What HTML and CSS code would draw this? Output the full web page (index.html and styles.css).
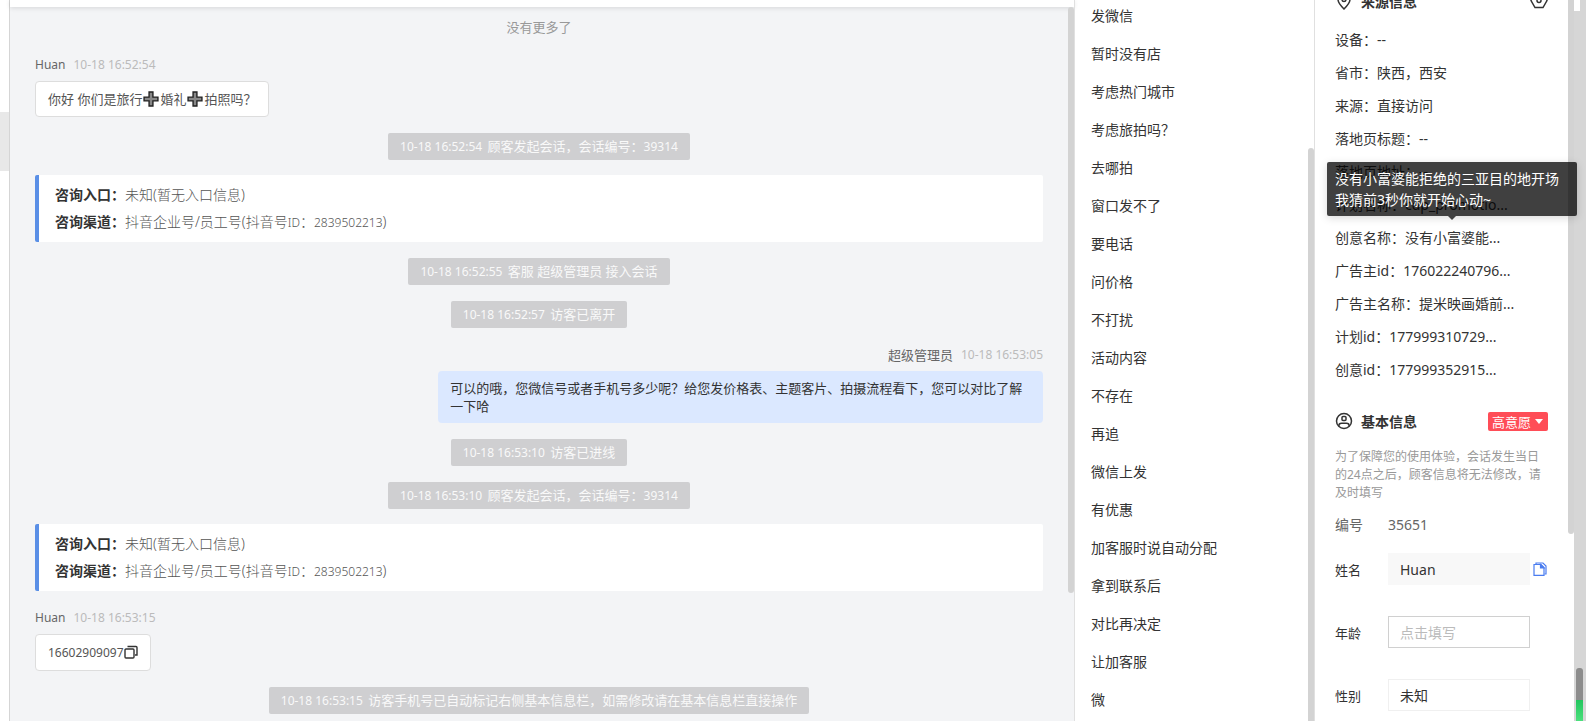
FILE: index.html
```html
<!DOCTYPE html>
<html lang="zh-CN">
<head>
  <meta charset="UTF-8" />
  <meta name="viewport" content="width=device-width, initial-scale=1.0" />
  <title>在线会话</title>
  <link rel="stylesheet" href="styles.css">
</head>
<body>
  <div class="left-strip"><div class="left-active"></div></div>

  <main class="chat">
    <div class="chat-top"></div>
    <div class="chat-body">
      <p class="no-more">没有更多了</p>

      <div class="message">
        <div class="meta"><span class="name">Huan</span><time>10-18 16:52:54</time></div>
        <div class="bubble">你好 你们是旅行<svg class="plus" viewBox="0 0 15 15"><path d="M5.700 1h3.600v4.700h4.700v3.600h-4.700v4.700h-3.600v-4.700h-4.700v-3.600h4.700z" fill="#888" stroke="#222" stroke-width="1.300"/></svg>婚礼<svg class="plus" viewBox="0 0 15 15"><path d="M5.700 1h3.600v4.700h4.700v3.600h-4.700v4.700h-3.600v-4.700h-4.700v-3.600h4.700z" fill="#888" stroke="#222" stroke-width="1.300"/></svg>拍照吗？</div>
      </div>

      <div class="notice"><time>10-18 16:52:54</time> 顾客发起会话，会话编号：<span class="num">39314</span></div>

      <div class="entry-card">
        <p><b>咨询入口：</b>未知(暂无入口信息)</p>
        <p><b>咨询渠道：</b>抖音企业号/员工号(抖音号<span class="num">ID</span>：<span class="num">2839502213</span>)</p>
      </div>

      <div class="notice"><time>10-18 16:52:55</time> 客服 超级管理员 接入会话</div>
      <div class="notice"><time>10-18 16:52:57</time> 访客已离开</div>

      <div class="message mine">
        <div class="meta"><span>超级管理员</span><time>10-18 16:53:05</time></div>
        <div class="bubble">可以的哦，您微信号或者手机号多少呢？给您发价格表、主题客片、拍摄流程看下，您可以对比了解一下哈</div>
      </div>

      <div class="notice"><time>10-18 16:53:10</time> 访客已进线</div>
      <div class="notice"><time>10-18 16:53:10</time> 顾客发起会话，会话编号：<span class="num">39314</span></div>

      <div class="entry-card">
        <p><b>咨询入口：</b>未知(暂无入口信息)</p>
        <p><b>咨询渠道：</b>抖音企业号/员工号(抖音号<span class="num">ID</span>：<span class="num">2839502213</span>)</p>
      </div>

      <div class="message">
        <div class="meta"><span class="name">Huan</span><time>10-18 16:53:15</time></div>
        <div class="bubble"><span class="num">16602909097</span><button class="copy-phone" aria-label="复制"><svg viewBox="0 0 14 14" fill="none" stroke="#333" stroke-width="1.400"><rect x="1" y="4" width="9" height="9" rx="1"/><path d="M3.500 1.500h8.500q1 0 1 1v7.500h-2"/></svg></button></div>
      </div>

      <div class="notice"><time>10-18 16:53:15</time> 访客手机号已自动标记右侧基本信息栏，如需修改请在基本信息栏直接操作</div>
    </div>
    <div class="thumb chat-thumb"></div>
  </main>

  <aside class="phrases">
    <ul>
      <li>发微信</li>
      <li>暂时没有店</li>
      <li>考虑热门城市</li>
      <li>考虑旅拍吗？</li>
      <li>去哪拍</li>
      <li>窗口发不了</li>
      <li>要电话</li>
      <li>问价格</li>
      <li>不打扰</li>
      <li>活动内容</li>
      <li>不存在</li>
      <li>再追</li>
      <li>微信上发</li>
      <li>有优惠</li>
      <li>加客服时说自动分配</li>
      <li>拿到联系后</li>
      <li>对比再决定</li>
      <li>让加客服</li>
      <li>微</li>
    </ul>
    <div class="thumb phrases-thumb"></div>
  </aside>

  <aside class="info">
    <div class="info-scroll">
      <div class="title">
        <svg class="icon" viewBox="0 0 18 18" fill="none" stroke="#333" stroke-width="1.500"><path d="M9 17C5.500 13.500 3 11 3 7.500a6 6 0 0 1 12 0c0 3.500-2.500 6-6 9.500z"/><circle cx="9" cy="7.500" r="2"/></svg>
        <h2>来源信息</h2>
        <button class="setting" aria-label="设置"><svg class="icon" viewBox="0 0 18 18" fill="none" stroke="#333" stroke-width="1.500"><path d="M5 1.500h8l4 7-4 7H5l-4-7z"/><circle cx="9" cy="8.500" r="2"/></svg></button>
      </div>
      <ul class="source">
        <li>设备：--</li>
        <li>省市：陕西，西安</li>
        <li>来源：直接访问</li>
        <li>落地页标题：--</li>
        <li>落地页地址：--</li>
        <li>计划名称：cdp_promotio...</li>
        <li class="has-tip">创意名称：没有小富婆能...
          <div class="tooltip" role="tooltip">没有小富婆能拒绝的三亚目的地开场我猜前3秒你就开始心动~</div>
        </li>
        <li>广告主id：176022240796...</li>
        <li>广告主名称：提米映画婚前...</li>
        <li>计划id：177999310729...</li>
        <li>创意id：177999352915...</li>
      </ul>

      <div class="title basic">
        <svg class="icon" viewBox="0 0 18 18" fill="none" stroke="#333" stroke-width="1.500"><circle cx="9" cy="9" r="7.500"/><rect x="7" y="4.500" width="4" height="4" rx="1"/><path d="M3.800 14c0-2 1.200-2.700 2.700-2.700h5c1.500 0 2.700.7 2.700 2.700"/></svg>
        <h2>基本信息</h2>
        <button class="intent">高意愿<i class="caret"></i></button>
      </div>
      <p class="hint">为了保障您的使用体验，会话发生当日的24点之后，顾客信息将无法修改，请及时填写</p>
      <div class="serial"><span class="label">编号</span><span>35651</span></div>
      <form class="fields">
        <div class="field">
          <label class="label" for="name">姓名</label>
          <input class="filled" type="text" id="name" value="Huan">
          <button type="button" class="copy" aria-label="复制姓名"><svg viewBox="0 0 14 14" fill="none" stroke="#4a7cf0" stroke-width="1.200"><path d="M3 2.500V1h7l3 3v8h-1.500"/><path d="M1 2.500h7l3 3V13.400H1z"/><path d="M7.500 2.500V6H11z" fill="#4a7cf0"/></svg></button>
        </div>
        <div class="field">
          <label class="label" for="age">年龄</label>
          <input type="text" id="age" placeholder="点击填写">
        </div>
        <div class="field">
          <label class="label" for="gender">性别</label>
          <select id="gender"><option>未知</option></select>
        </div>
      </form>
    </div>
    <div class="thumb info-thumb"></div>
  </aside>

  <div class="edge">
    <div class="edge-gap"></div>
    <div class="edge-mark"></div>
  </div>
</body>
</html>
```
FILE: styles.css
```css
* {
  box-sizing: border-box;
  margin: 0;
  padding: 0;
}
body {
  display: flex;
  height: 100vh;
  overflow: hidden;
  background: #fff;
  color: #333;
  font-family: "Noto Sans", "Noto Sans CJK SC", sans-serif;
  font-size: 14px;
}
ul {
  list-style: none;
}
button {
  border: none;
  background: none;
  font-family: inherit;
  cursor: pointer;
}
.thumb {
  position: absolute;
  right: 0;
  width: 6px;
  border-radius: 3px;
  background: #d3d3d3;
}
.left-strip {
  flex: none;
  width: 10px;
  padding-top: 112px;
  border-right: 1px solid #d5d5d5;
}
.left-active {
  height: 59px;
  background: #e8e8e8;
}

/* chat */
.chat {
  position: relative;
  flex: 1;
  min-width: 0;
  background: #f3f4f6;
  font-size: 13px;
}
.chat-top {
  height: 7px;
  background: #fff;
  box-shadow: 0 1px 5px rgba(0, 0, 0, 0.12);
}
.chat-body {
  display: flex;
  flex-direction: column;
  align-items: center;
  gap: 16px;
  padding: 9px 31px 0 25px;
}
.no-more {
  line-height: 22px;
  color: #999;
}
.num,
.name,
time {
  font-size: 12px;
}
.message {
  display: flex;
  flex-direction: column;
  align-items: flex-start;
  align-self: stretch;
}
.mine {
  align-items: flex-end;
}
.meta {
  display: flex;
  gap: 8px;
  margin-bottom: 5px;
  line-height: 22px;
  color: #666;
}
.meta time {
  color: #bbb;
}
.bubble {
  max-width: 60%;
  padding: 8px 12px;
  border: 1px solid #ddd;
  border-radius: 4px;
  background: #fff;
  line-height: 18px;
  color: #555;
}
.mine .bubble {
  border: none;
  background: #dbe8ff;
  color: #333;
}
.plus {
  width: 16px;
  height: 16px;
  margin: 0 1px;
  vertical-align: -3px;
}
.copy-phone svg {
  display: block;
  width: 14px;
  height: 14px;
}
.copy-phone {
  vertical-align: -2px;
}
.notice {
  padding: 0 12px;
  border-radius: 2px;
  background: #cfcfd1;
  line-height: 27px;
  color: #f9f9f9;
}
.notice time {
  margin-right: 2px;
}
.entry-card {
  align-self: stretch;
  margin-top: -1px;
  padding: 6px 16px;
  border-left: 4px solid #5a8fe6;
  border-radius: 2px;
  background: #fff;
  font-size: 14px;
  font-weight: 300;
  line-height: 27px;
  color: #555;
}
.entry-card b {
  font-weight: 700;
  color: #333;
}

/* quick phrases */
.phrases {
  position: relative;
  flex: none;
  width: 241px;
  border: 1px solid #e0e0e0;
  border-width: 0 1px;
}
.phrases ul {
  margin-top: -3px;
  padding-left: 16px;
}
.phrases li {
  line-height: 38px;
}
.chat-thumb {
  top: 7px;
  height: 586px;
}
.phrases-thumb {
  top: 148px;
  bottom: -10px;
}

/* customer info */
.info {
  position: relative;
  flex: none;
  width: 259px;
}
.info-scroll {
  margin-top: -11px;
  padding: 0 26px 0 20px;
}
.info-thumb {
  top: -10px;
  height: 544px;
}
.title {
  display: flex;
  align-items: center;
  height: 24px;
  margin-bottom: 10px;
}
.title h2 {
  flex: 1;
  margin-left: 8px;
  font-size: 14px;
  font-weight: 700;
}
.icon {
  display: block;
  width: 18px;
  height: 18px;
}
.source li {
  line-height: 33px;
  white-space: nowrap;
}
.has-tip {
  position: relative;
}
.tooltip {
  position: absolute;
  left: -8px;
  bottom: 38px;
  z-index: 2;
  width: 250px;
  padding: 6px 8px;
  border-radius: 2px;
  background: rgba(0, 0, 0, 0.75);
  box-shadow: 0 2px 8px rgba(0, 0, 0, 0.15);
  line-height: 21px;
  white-space: normal;
  color: #fff;
}
.tooltip::after {
  content: "";
  position: absolute;
  top: 100%;
  left: 50%;
  margin-left: -4px;
  border: 4px solid transparent;
  border-top-color: #404040;
  border-bottom: none;
}
.basic {
  margin-top: 23px;
}
.intent {
  display: flex;
  align-items: center;
  gap: 4px;
  height: 19px;
  padding: 0 5px 0 4px;
  border-radius: 2px;
  background: #ff4d57;
  font-size: 13px;
  color: #fff;
}
.caret {
  border: 4px solid transparent;
  border-top: 5px solid #fff;
  border-bottom: none;
}
.hint {
  margin-top: 15px;
  font-size: 12px;
  line-height: 18px;
  color: #999;
}
.serial {
  display: flex;
  margin: 12px 0 17px;
  line-height: 22px;
  color: #666;
}
.label {
  flex: none;
  width: 53px;
}
.fields {
  display: flex;
  flex-direction: column;
  gap: 31px;
}
.field {
  display: flex;
  align-items: center;
}
.field .label {
  font-size: 13px;
}
.field input,
.field select {
  width: 142px;
  height: 32px;
  padding: 0 11px;
  border: 1px solid #d0d0d0;
  background: #fff;
  font: inherit;
  color: #333;
  appearance: none;
}
.field input::placeholder {
  color: #bbb;
}
.field .filled {
  border-color: #f8f8f8;
  background: #f8f8f8;
}
.field select {
  border-color: #f0f0f0;
}
.copy {
  margin-left: 3px;
}
.copy svg {
  display: block;
  width: 14px;
  height: 14px;
}

/* outer page scrollbar */
.edge {
  display: flex;
  flex-direction: column;
  justify-content: space-between;
  flex: none;
  width: 12px;
  background: #d6d6d6;
}
.edge-gap {
  width: 6px;
  height: 11px;
  background: #fff;
}
.edge-mark {
  width: 7px;
  height: 53px;
  margin-left: 2px;
  border-radius: 3px 3px 0 0;
  background: linear-gradient(#8c8c8c 32px, #22c55e 32px, #4be07c);
}
```
